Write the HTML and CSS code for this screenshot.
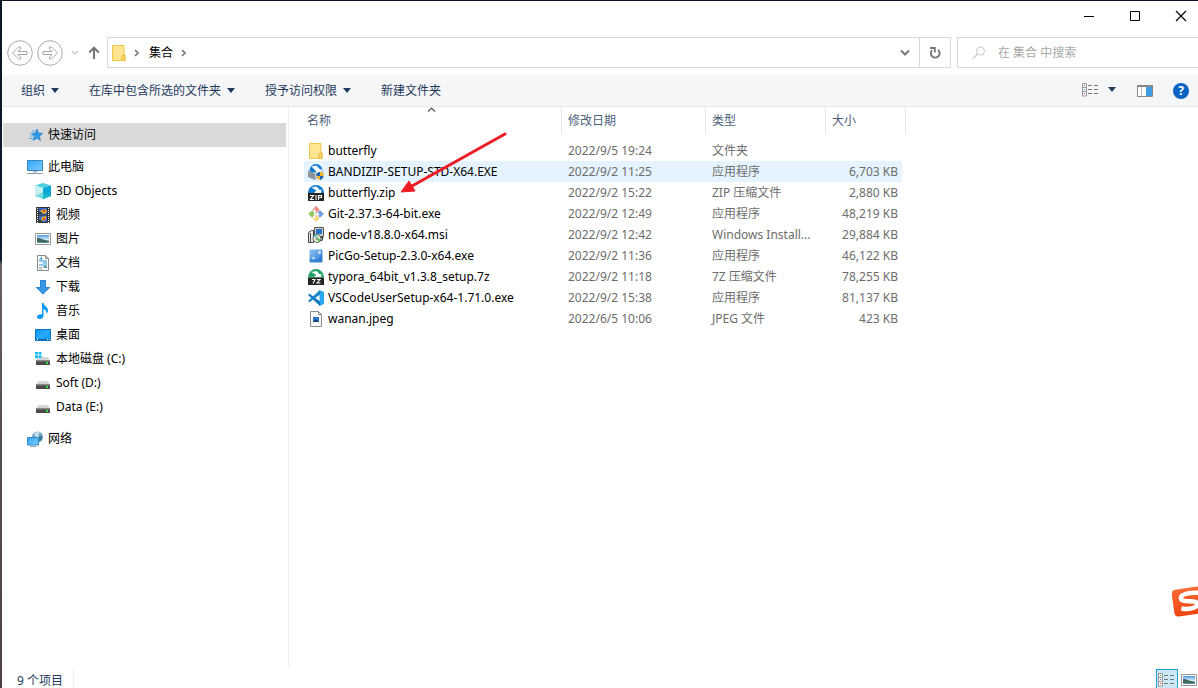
FILE: index.html
```html
<!DOCTYPE html>
<html lang="zh-CN">
<head>
<meta charset="utf-8">
<title>集合</title>
<link rel="stylesheet" href="styles.css">
</head>
<body>
<svg class="defs" aria-hidden="true">
  <defs>
    <linearGradient id="sky" x1="0" y1="0" x2="1" y2="1"><stop offset="0" stop-color="#2fa8ff"/><stop offset="1" stop-color="#7cccff"/></linearGradient>
    <linearGradient id="desk" x1="0" y1="0" x2="1" y2="1"><stop offset="0" stop-color="#0a94f5"/><stop offset=".5" stop-color="#2aa9ff"/><stop offset="1" stop-color="#0696ff"/></linearGradient>
    <linearGradient id="photo" x1="0" y1="0" x2="0" y2="1"><stop offset="0" stop-color="#4f96e0"/><stop offset=".55" stop-color="#d5ecfb"/><stop offset="1" stop-color="#5d93b5"/></linearGradient>
    <linearGradient id="pic" x1="0" y1="0" x2="1" y2="1"><stop offset="0" stop-color="#8cc4f6"/><stop offset="1" stop-color="#2b7bd0"/></linearGradient>
    <linearGradient id="sogou" x1="0" y1="0" x2="0" y2="1"><stop offset="0" stop-color="#fb6b35"/><stop offset="1" stop-color="#ee4310"/></linearGradient>
    <symbol id="folder" viewBox="0 0 16 16"><path d="M1.500 .5h11.500v9.500h1v5.500H1.500z" fill="#ffe592" stroke="#efc54c"/><path d="M11 15.500v-4.500l1-1h2v5.500z" fill="#fbd867" stroke="#e8b93c"/></symbol>
    <symbol id="drive" viewBox="0 0 16 16"><path d="M3 6h10l2 4H1z" fill="#d3d6d9"/><path d="M1 9.500h14V14H1z" fill="#4a4a4a"/><path d="M1 9.500h14v1H1z" fill="#858585"/><path d="M11 11h2v2h-2z" fill="#35e23c"/></symbol>
    <symbol id="picture" viewBox="0 0 16 16"><path d="M.5 2.500h15v11H.5z" fill="#fff" stroke="#999"/><path d="M2 4h12v8H2z" fill="url(#photo)"/><path d="M2 7c4 0 6 2 12 3v1c-5 1-8 0-12 0z" fill="#3c6b5b"/></symbol>
    <symbol id="details" viewBox="0 0 18 14"><path d="M.5.5h4v12.500h-4zM.5 4.500h4M.5 8.500h4" fill="#fff" stroke="#999"/><path d="M2 2h1v1H2z" fill="#397f4d"/><path d="M2 6h1v1H2z" fill="#3977dc"/><path d="M2 10h1v1H2z" fill="#d73332"/><path d="M6 2.500h4m2 0h4M6 6.500h4m2 0h4M6 10.500h4m2 0h4" stroke="#777"/></symbol>
  </defs>
</svg>
<div class="window">
  <header class="titlebar">
    <button class="caption" aria-label="最小化"><svg width="12" height="12"><path d="M1 6.500h10" stroke="#000"/></svg></button>
    <button class="caption" aria-label="最大化"><svg width="12" height="12"><path d="M1.500 1.500h9v9h-9z" fill="none" stroke="#000"/></svg></button>
    <button class="caption" aria-label="关闭"><svg width="12" height="12"><path d="M1 1l10 10M11 1L1 11" stroke="#000" stroke-width="1.200"/></svg></button>
  </header>

  <div class="navrow">
    <nav class="history">
      <button aria-label="后退"><svg width="26" height="26" fill="none" stroke="#a8a8a8"><circle cx="13" cy="13" r="12.300"/><path d="M5.500 13l6-6h2v2l-2.500 2.500h9v3h-9l2.500 2.500v2h-2z"/></svg></button>
      <button aria-label="前进"><svg width="26" height="26" fill="none" stroke="#a8a8a8"><circle cx="13" cy="13" r="12.300"/><path d="M20.500 13l-6-6h-2v2l2.500 2.500H6v3h9l-2.500 2.500v2h2z"/></svg></button>
      <button class="recent" aria-label="最近位置"><svg width="8" height="6"><path d="M1 1l3 3 3-3" fill="none" stroke="#c9c9c9" stroke-width="1.500"/></svg></button>
      <button aria-label="上移"><svg width="12" height="14"><path d="M6 13V2M1.200 6.500L6 1.700l4.800 4.800" fill="none" stroke="#777" stroke-width="2"/></svg></button>
    </nav>
    <div class="address">
      <svg width="16" height="16"><use href="#folder"/></svg>
      <svg class="chev" width="6" height="8"><path d="M1 1l3 3-3 3" fill="none" stroke="#777" stroke-width="1.700"/></svg>
      <button class="crumb">集合</button>
      <svg class="chev" width="6" height="8"><path d="M1 1l3 3-3 3" fill="none" stroke="#777" stroke-width="1.700"/></svg>
      <button class="drop" aria-label="展开"><svg width="12" height="8"><path d="M2 1.500l4 4 4-4" fill="none" stroke="#777" stroke-width="2"/></svg></button>
      <button class="refresh" aria-label="刷新"><svg width="14" height="14"><path d="M10 3.800A4.400 4.400 0 1 1 4 4.200" fill="none" stroke="#777" stroke-width="1.900"/><path d="M2 2h4.800v4.500" fill="none" stroke="#777" stroke-width="1.900"/></svg></button>
    </div>
    <label class="search">
      <svg width="14" height="14"><circle cx="8.500" cy="5" r="4" fill="none" stroke="#cfc6c6"/><path d="M5.500 8L1 12.500" stroke="#cfc6c6" stroke-width="1.200"/></svg>
      <input type="text" placeholder="在 集合 中搜索" aria-label="搜索">
    </label>
  </div>

  <div class="toolbar">
    <button>组织 <i class="tri"></i></button>
    <button>在库中包含所选的文件夹 <i class="tri"></i></button>
    <button>授予访问权限 <i class="tri"></i></button>
    <button>新建文件夹</button>
    <div class="views">
      <button aria-label="更改视图"><svg width="18" height="14"><use href="#details"/></svg><i class="tri"></i></button>
      <button aria-label="预览窗格"><svg width="16" height="12"><path d="M.5.5h15v11H.5z" fill="#fff" stroke="#888"/><path d="M0 0h16v2H0z" fill="#888"/><path d="M4.500 2v9" stroke="#bbb"/><path d="M9 2h6v9H9z" fill="#3f9ce5"/></svg></button>
      <button class="help" aria-label="帮助">?</button>
    </div>
  </div>

  <div class="body">
    <nav class="tree">
      <a class="root active" href="#"><svg width="16" height="16"><path d="M10 2l1.500 4 4.300.3-3.300 2.900 1 4.300-3.500-2.300L6.300 13.500l1-4.300L4.500 6.500l3.800-.5z" fill="#2f9ae8" stroke="#1c7ac4" stroke-width=".6"/><path d="M5 4h3M3 6.500h3M3 9h3M2 11.500h4" stroke="#4ba8e8"/></svg>快速访问</a>
      <a class="root" href="#"><svg width="16" height="16"><path d="M.5 1.500h15v10H.5z" fill="url(#sky)" stroke="#3b84b8"/><path d="M6 12h4v1.500H6z" fill="#a9b9c6"/><path d="M0 14.500h16" stroke="#8ea1b0"/></svg>此电脑</a>
      <a href="#"><svg width="16" height="16"><path d="M0 2.500L8 0l8 2.500L8 5z" fill="#4dd0de"/><path d="M0 2.500L8 5v11l-8-3z" fill="#c6f0f1"/><path d="M0 13l8-4v7z" fill="#7adce2"/><path d="M16 2.500L8 5v11l8-3z" fill="#0aa7d6"/><path d="M8 9l8 4-8 3z" fill="#17b6cc"/></svg>3D Objects</a>
      <a href="#"><svg width="16" height="16"><path d="M1 0h14v16H1z" fill="#333"/><path d="M4 1h8v6.500H4zM4 8.500h8V15H4z" fill="#3f66c7"/><path d="M5 4l5-2 2 2-2 3-3-1zM7 10l4-1v3l-2 2-3-1z" fill="#e6b32d"/><path d="M8 3h2v2H8zM8 11h2v2H8z" fill="#d4472c"/><path d="M4 5h3v2H4zM4 13h3v2H4z" fill="#254d35"/><path d="M2.500 1v15M13.500 1v15" stroke="#fff" stroke-dasharray="1 1"/></svg>视频</a>
      <a href="#"><svg width="16" height="16"><use href="#picture"/></svg>图片</a>
      <a href="#"><svg width="16" height="16"><path d="M2.500.5h8l3 3v12h-11z" fill="#fff" stroke="#8a8a8a"/><path d="M10.500.5v3h3" fill="none" stroke="#8a8a8a"/><path d="M4 6h8M7.500 8H12M4 10h8" stroke="#2b8fdb"/><path d="M4.500 5l2-2.500v2.500" fill="none" stroke="#2b8fdb"/><path d="M4 12.500h3.500M4 14h3.500" stroke="#999" stroke-width=".8"/><path d="M8.500 11h3.500v2H8.500z" fill="#5c9e9a"/></svg>文档</a>
      <a href="#"><svg width="16" height="16"><path d="M5 1h6v7h4.500L8 15.500.5 8H5z" fill="#3c97e2"/><path d="M5.500 1.500h5v7h4L8 15 1.500 8.500h4z" fill="none" stroke="#2882cf" stroke-width=".8"/></svg>下载</a>
      <a href="#"><svg width="16" height="16"><path d="M7 0h1.500c.5 3 4.500 4 4.500 7.500 0 1.500-.7 2.500-1.500 3.500.3-2.500-.8-4-3-5v6.500C8.500 15 6.500 16 4.700 16 3 16 2 15 2 13.700c0-2 2.500-3 5-2.400z" fill="#0b9af5"/></svg>音乐</a>
      <a href="#"><svg width="16" height="16"><path d="M.5 2.500h15v11H.5z" fill="url(#desk)" stroke="#0b74c4"/><path d="M1 12.500h14" stroke="#0b5fa2"/><path d="M2 12.500h1m9 0h1m1 0h1" stroke="#fff"/></svg>桌面</a>
      <a href="#"><svg width="16" height="16"><use href="#drive"/><path d="M0 1h3v2.500H0zM3.700 1H6.500v2.500H3.700zM0 4.200h3V7H0zM3.700 4.200h2.800V7H3.700z" fill="#13bdf2"/></svg>本地磁盘 (C:)</a>
      <a href="#"><svg width="16" height="16"><use href="#drive"/></svg>Soft (D:)</a>
      <a href="#"><svg width="16" height="16"><use href="#drive"/></svg>Data (E:)</a>
      <a class="root" href="#"><svg width="16" height="16"><circle cx="10.500" cy="6" r="5.500" fill="#72a7c4"/><path d="M7 3c2-3 5-2 6-1l-2 2 2 2-3 1z" fill="#c7e0e8"/><path d="M12 5h3v4l-3 1z" fill="#397b98"/><path d="M.5 6.500h11v7.500H.5z" fill="url(#sky)" stroke="#3588c5"/><path d="M3 15.500h6" stroke="#91a6b5"/></svg>网络</a>
    </nav>

    <main class="files">
      <table>
        <colgroup><col class="c-name"><col class="c-date"><col class="c-type"><col class="c-size"></colgroup>
        <thead>
          <tr>
            <th><button>名称</button><svg class="sort" width="9" height="5"><path d="M1 4.500L4.500 1 8 4.500" fill="none" stroke="#555" stroke-width="1.200"/></svg></th>
            <th><button>修改日期</button></th>
            <th><button>类型</button></th>
            <th><button>大小</button></th>
          </tr>
        </thead>
        <tbody>
          <tr><td><span class="name"><svg width="16" height="16"><use href="#folder"/></svg>butterfly</span></td><td>2022/9/5 19:24</td><td>文件夹</td><td></td></tr>
          <tr class="hover"><td><span class="name"><svg width="16" height="16"><path d="M1.500 6.500a6.500 6.500 0 0 1 13 0l-2 2h-9z" fill="#147bd1"/><path d="M3.500 2.500l5-1L12 5.500l2-.5-1 5H6.500l1.800-2.500z" fill="#fff"/><path d="M0 6.500l7 3V16l-7-3z" fill="#8c949c"/><path d="M7 9.500l8.500-3V13L7 16z" fill="#c1c8ce"/><path d="M8.500 9L12 8l3.500 1v3c0 2-2 3.500-3.500 4-1.500-.5-3.500-2-3.500-4z" fill="#f3b92c"/><path d="M8.500 9L12 8v4H8.500zM12 12h3.500c0 2-2 3.500-3.500 4z" fill="#1c64b8"/></svg>BANDIZIP-SETUP-STD-X64.EXE</span></td><td>2022/9/2 11:25</td><td>应用程序</td><td>6,703 KB</td></tr>
          <tr><td><span class="name"><svg width="16" height="16"><path d="M0 8a8 8 0 0 1 16 0z" fill="#117bd0"/><path d="M3.500 2.500l5-1L12 5l1.500-.5L13 8H6l2.300-2.500z" fill="#fff"/><path d="M0 8h16v8H0z" fill="#252525"/><path d="M2 10.500h3.500l-3 4h3.500M8 10v5M10.500 15v-4.500h3v2h-3" fill="none" stroke="#fff" stroke-width="1.100"/></svg>butterfly.zip</span></td><td>2022/9/2 15:22</td><td>ZIP 压缩文件</td><td>2,880 KB</td></tr>
          <tr><td><span class="name"><svg width="16" height="16"><path d="M8 0l3.700 3.700L8 7.500 4.300 3.700z" fill="#f08a83"/><path d="M4 4.200L7.700 8 4 11.700.2 8z" fill="#94c95f"/><path d="M12 4.200L15.800 8 12 11.700 8.300 8z" fill="#6f9ce8"/><path d="M8 8.500l3.700 3.700L8 16l-3.700-3.800z" fill="#fbd77d"/><path d="M6.500 3v9M7 5.500l3 3" stroke="#fff"/><circle cx="6.500" cy="5" r="1.200" fill="#fff"/><circle cx="10" cy="8.500" r="1.200" fill="#fff"/><circle cx="6.500" cy="11" r="1.200" fill="#fff"/></svg>Git-2.37.3-64-bit.exe</span></td><td>2022/9/2 12:49</td><td>应用程序</td><td>48,219 KB</td></tr>
          <tr><td><span class="name"><svg width="16" height="16"><path d="M6.500.5h9v9h-9z" fill="#d4d0c8" stroke="#555"/><path d="M8 2h6v5H8z" fill="#2475d0"/><path d="M7 10.500h8l-1 3H8z" fill="#bbb" stroke="#333"/><path d="M.5 5.500l3-2h2v12h-5z" fill="#e8e8e8" stroke="#444"/><path d="M2.500 6v9" stroke="#444"/><circle cx="9" cy="11.500" r="4" fill="#e4f4d8" stroke="#444" stroke-width=".8"/><path d="M9 11.500L6 9l2-1.200z" fill="#35d8d8"/><path d="M9 11.500l3.500 1-2 2.500z" fill="#46be3e"/><circle cx="9" cy="11.500" r="1" fill="#fff" stroke="#333" stroke-width=".6"/></svg>node-v18.8.0-x64.msi</span></td><td>2022/9/2 12:42</td><td>Windows Install...</td><td>29,884 KB</td></tr>
          <tr><td><span class="name"><svg width="16" height="16"><rect x="1.500" y="1.500" width="13" height="13" rx="1" fill="url(#pic)"/><path d="M2 9c1 4 6 4 9 1l3-4v8H2z" fill="#2b7bd0" opacity=".7"/><circle cx="11.500" cy="4.500" r="1.300" fill="#fff"/><circle cx="5.500" cy="10" r="1" fill="#fff"/></svg>PicGo-Setup-2.3.0-x64.exe</span></td><td>2022/9/2 11:36</td><td>应用程序</td><td>46,122 KB</td></tr>
          <tr><td><span class="name"><svg width="16" height="16"><path d="M0 8.500a8 8.500 0 0 1 16 0z" fill="#21a565"/><path d="M3.500 3l5-1L12 5.500l1.500-.5-.5 3H6l2.300-2z" fill="#fff"/><path d="M0 8.500h16V16H0z" fill="#252525"/><path d="M4 10.500h3L5 14.500M9 10.500h3L9 14h3.500" fill="none" stroke="#fff" stroke-width="1.100"/></svg>typora_64bit_v1.3.8_setup.7z</span></td><td>2022/9/2 11:18</td><td>7Z 压缩文件</td><td>78,255 KB</td></tr>
          <tr><td><span class="name"><svg width="16" height="16"><path d="M11.500 0L16 2v12l-4.500 2z" fill="#2aa7ee"/><path d="M0 5l1.500-1.300L12 11.500V16z" fill="#0f79be"/><path d="M0 11l1.500 1.300L12 4.500V0z" fill="#1587cf"/></svg>VSCodeUserSetup-x64-1.71.0.exe</span></td><td>2022/9/2 15:38</td><td>应用程序</td><td>81,137 KB</td></tr>
          <tr><td><span class="name"><svg width="16" height="16"><path d="M2.500.5h8l3 3v12h-11z" fill="#fafafa" stroke="#8a8a8a"/><path d="M10.500.5v3h3" fill="none" stroke="#8a8a8a"/><path d="M5 6h6v5H5z" fill="#2a79cf"/><path d="M5 11l2.500-3L11 11z" fill="#183e70"/></svg>wanan.jpeg</span></td><td>2022/6/5 10:06</td><td>JPEG 文件</td><td>423 KB</td></tr>
        </tbody>
      </table>
      <svg class="pointer" width="108" height="62"><path d="M105 2L12 54" stroke="#ed1c24" stroke-width="3" stroke-linecap="round"/><path d="M1 60l8-11 6 10z" fill="#ed1c24" stroke="#ed1c24" stroke-linejoin="round"/></svg>
    </main>
  </div>

  <footer class="status">
    <span class="count">9 个项目</span>
    <div class="modes">
      <button class="on" aria-label="详细信息"><svg width="18" height="14"><use href="#details"/></svg></button>
      <button aria-label="大图标"><svg width="16" height="16"><use href="#picture"/></svg></button>
    </div>
  </footer>

  <svg class="ime" width="26" height="32" aria-label="输入法"><g transform="rotate(-8 16 16)"><rect x="1" y="2" width="30" height="27" rx="4" fill="url(#sogou)"/><path d="M28 8.500C20 6.500 9.500 7 9.500 11.500c0 5 15.500 3 15.500 7.500 0 4-9 5-16.500 2.500" fill="none" stroke="#fff" stroke-width="4.500"/></g></svg>
</div>
</body>
</html>
```
FILE: styles.css
```css
* { box-sizing: border-box; }

body {
  margin: 0;
  height: 100vh;
  padding: 1px 0 0 2px;
  overflow: hidden;
  background: linear-gradient(#0d1626 0, #0d1c30 260px, #6b6064 264px, #55504f 420px, #4a4044 100%);
  font: 12px/20px "Noto Sans", "Noto Sans CJK SC", sans-serif;
  color: #000;
}

button {
  display: flex;
  align-items: center;
  padding: 0;
  border: 0;
  background: none;
  font: inherit;
  color: inherit;
}

svg { display: block; flex: none; }
.defs { position: absolute; width: 0; height: 0; }

.window {
  position: relative;
  display: flex;
  flex-direction: column;
  height: 100%;
  background: #fff;
}

.titlebar { display: flex; justify-content: flex-end; height: 29px; margin-right: -6px; }
.caption { width: 46px; justify-content: center; }

.navrow { display: flex; align-items: center; height: 45px; }
.history { display: flex; align-items: center; gap: 4px; width: 105px; padding-left: 5px; }
.recent { padding: 0 5px 0 4px; }

.address {
  flex: 1;
  display: flex;
  align-items: center;
  height: 31px;
  padding-left: 3px;
  border: 1px solid #d9d9d9;
}
.chev { margin: 0 8px 0 7px; }
.crumb { height: 29px; padding: 0 1px; }
.drop { margin-left: auto; padding: 0 8px; }
.refresh { justify-content: center; width: 31px; height: 29px; border-left: 1px solid #d9d9d9; }

.search {
  display: flex;
  align-items: center;
  gap: 12px;
  width: 241px;
  height: 31px;
  margin-left: 6px;
  padding-left: 14px;
  border: 1px solid #d9d9d9;
  border-right: 0;
}
.search input { flex: 1; min-width: 0; border: 0; padding: 0; outline: 0; background: none; font: inherit; }
.search input::placeholder { color: #a8a8a8; opacity: 1; }

.toolbar {
  display: flex;
  align-items: center;
  gap: 30px;
  height: 32px;
  padding: 0 9px 0 19px;
  background: #f5f6f7;
  border-bottom: 1px solid #e8e8e8;
  color: #1e395b;
}
.tri {
  margin-left: 6px;
  border: 4px solid transparent;
  border-top: 5px solid #1e395b;
  border-bottom: 0;
}
.views { display: flex; align-items: center; gap: 21px; margin-left: auto; }
.views > button:first-child { padding-bottom: 2px; }
.views .tri { margin-left: 8px; }
.help {
  justify-content: center;
  width: 16px;
  height: 16px;
  margin-left: -1px;
  border-radius: 50%;
  background: #0a63c2;
  color: #fff;
  font-weight: 700;
}

.body { flex: 1; display: flex; min-height: 0; }

.tree {
  width: 287px;
  padding: 16px 2px 0 1px;
  border-right: 1px solid #f0f0f0;
}
.tree a {
  display: flex;
  align-items: center;
  gap: 5px;
  height: 24px;
  padding-left: 32px;
  color: #000;
  text-decoration: none;
}
.tree .root { padding-left: 24px; }
.tree .active { margin-bottom: 8px; background: #d9d9d9; }
.tree a + .root:last-child { margin-top: 8px; }

.files { position: relative; flex: 1; padding-left: 15px; }
table { width: 602px; table-layout: fixed; border-spacing: 0; }
.c-name { width: 258px; }
.c-date { width: 144px; }
.c-type { width: 120px; }
.c-size { width: 80px; }
th { position: relative; padding: 0 0 6px; }
th button {
  width: 100%;
  height: 27px;
  padding-left: 6px;
  border-right: 1px solid #e5e5e5;
  color: #4c607a;
  font-weight: 400;
}
th:first-child button { padding-left: 3px; }
.sort { position: absolute; top: 0; left: 123px; }

td { height: 21px; padding: 0 0 0 6px; color: #6d6d6d; white-space: nowrap; }
td:first-child { padding-left: 4px; color: #000; }
td:last-child { padding-right: 4px; border-right: 4px solid transparent; background-clip: padding-box; text-align: right; }
.hover td { background-color: #e5f3ff; }
.name { display: flex; align-items: center; gap: 4px; }
.pointer { position: absolute; top: 25px; left: 111px; }

.status { display: flex; height: 20px; margin-right: -2px; overflow: hidden; color: #1e395b; }
.count { padding: 3px 10px 0 15px; border-right: 1px solid #f0f0f0; }
.modes { display: flex; align-items: flex-start; margin: 1px 0 0 auto; }
.modes button { justify-content: center; width: 22px; height: 22px; }
.modes .on { border: 1px solid #26a0da; background: #cbe8f6; }

.ime { position: absolute; right: 0; bottom: 70px; }
```
